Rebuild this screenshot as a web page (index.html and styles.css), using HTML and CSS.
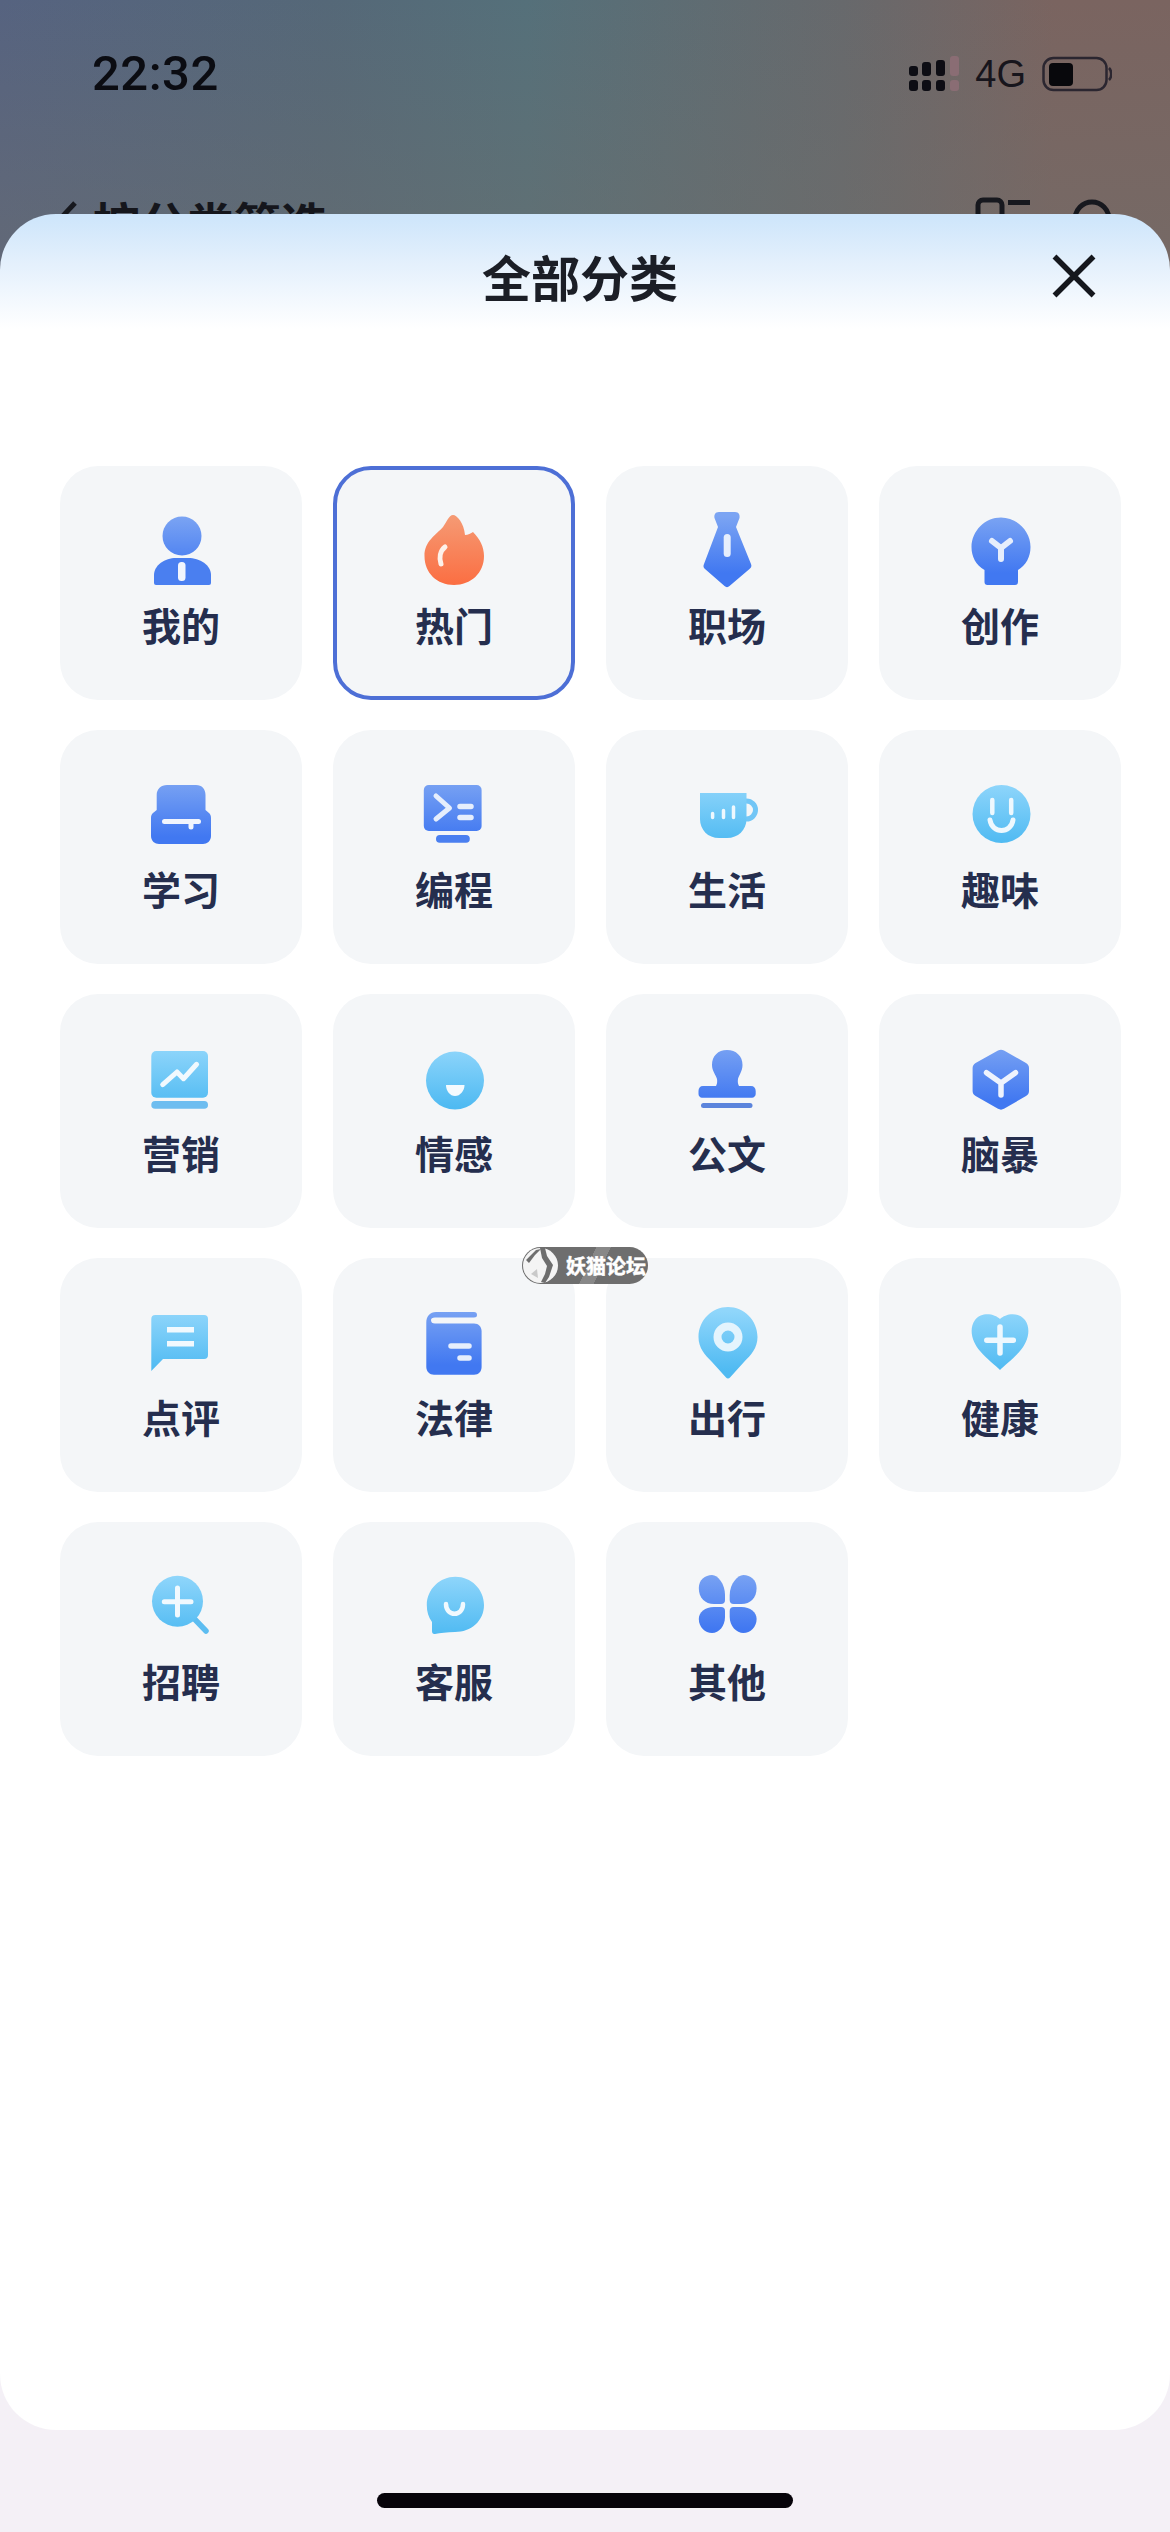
FILE: index.html
```html
<!DOCTYPE html>
<html lang="zh-CN">
<head>
  <meta charset="UTF-8" />
  <meta name="viewport" content="width=device-width, initial-scale=1.0"/>
  <title>全部分类</title>
  <link rel="stylesheet" href="styles.css">
</head>
<body>

  <svg class="icon-defs" aria-hidden="true">
    <defs>
      <linearGradient id="blue" gradientUnits="userSpaceOnUse" x1="0" y1="5" x2="0" y2="62">
        <stop offset="0" stop-color="#7ba4f3"/>
        <stop offset="1" stop-color="#4178f1"/>
      </linearGradient>
      <linearGradient id="sky" gradientUnits="userSpaceOnUse" x1="0" y1="8" x2="0" y2="68">
        <stop offset="0" stop-color="#90d6fb"/>
        <stop offset="1" stop-color="#4fbaf2"/>
      </linearGradient>
      <linearGradient id="orange" gradientUnits="userSpaceOnUse" x1="0" y1="5" x2="0" y2="74">
        <stop offset="0" stop-color="#f59a74"/>
        <stop offset="1" stop-color="#fb6e42"/>
      </linearGradient>
    </defs>
  </svg>

  <header class="backdrop">
    <div class="status-bar">
      <span class="clock">22:32</span>
      <div class="status-right">
        <svg class="signal" viewBox="0 0 52 36" width="52" height="36">
          <g fill="#0d0d14">
            <rect x="0" y="10" width="9" height="10" rx="3"/>
            <rect x="13" y="6" width="9" height="14" rx="3"/>
            <rect x="27" y="4" width="9" height="16" rx="3"/>
            <rect x="0" y="24" width="9" height="11" rx="3"/>
            <rect x="13" y="24" width="9" height="11" rx="3"/>
            <rect x="27" y="24" width="9" height="11" rx="3"/>
          </g>
          <g fill="#8a6d74">
            <rect x="41" y="0" width="9" height="20" rx="3"/>
            <rect x="41" y="24" width="9" height="11" rx="3"/>
          </g>
        </svg>
        <span class="network">4G</span>
        <svg class="battery" viewBox="0 0 70 36" width="70" height="36">
          <rect x="1.5" y="2" width="63" height="32" rx="10" fill="none" stroke="#2b2630" stroke-width="2.5"/>
          <rect x="7" y="7" width="24" height="23" rx="4" fill="#08080c"/>
          <path d="M67 12 C70 15 70 21 67 24" fill="none" stroke="#2b2630" stroke-width="2.5"/>
        </svg>
      </div>
    </div>
    <div class="nav-bar">
      <svg class="nav-back" viewBox="0 0 24 48" width="24" height="48">
        <path d="M20 6 L5 22 L20 38" fill="none" stroke="#17181e" stroke-width="5"/>
      </svg>
      <span class="nav-title">按分类筛选</span>
      <svg class="nav-icons" viewBox="0 0 140 48" width="140" height="48">
        <rect x="3" y="3" width="24" height="40" rx="5" fill="none" stroke="#17181e" stroke-width="5"/>
        <rect x="33" y="3" width="22" height="5" fill="#17181e"/>
        <circle cx="117" cy="22" r="17" fill="none" stroke="#17181e" stroke-width="5"/>
      </svg>
    </div>
  </header>

  <main class="sheet">
    <div class="sheet-head">
      <h1 class="sheet-title">全部分类</h1>
      <svg class="close-icon" viewBox="0 0 44 44" width="44" height="44">
        <path d="M2.5 2.5 L41.5 41.5 M41.5 2.5 L2.5 41.5" fill="none" stroke="#15171d" stroke-width="5.5"/>
      </svg>
    </div>

    <div class="category-grid">

      <div class="category-card">
        <svg class="category-icon" viewBox="0 0 80 80">
          <circle cx="41" cy="25" r="19.5" fill="url(#blue)"/>
          <path d="M13 72 V64 C13 54 24 47 35 47 H47 C59 47 70 54 70 64 V72 a2 2 0 0 1-2 2 H15 a2 2 0 0 1-2-2z" fill="#4a7ff0"/>
          <rect x="37" y="51" width="7.5" height="19" rx="3.5" fill="#f1f5fd"/>
        </svg>
        <span class="category-label">我的</span>
      </div>

      <div class="category-card is-active">
        <svg class="category-icon" viewBox="0 0 80 80">
          <path d="M39 4 C43 4 50 12 51 24 C54 24 57 22 59 21 C66 28 70 36 70 45 C70 62 57 74 40 74 C23 74 10.5 62 10.5 45 C10.5 30 22 24 29 16 C32 12 35 4 39 4 Z" fill="url(#orange)"/>
          <path d="M31 36 C26 40 25 47 27 53" fill="none" stroke="#fdf1ea" stroke-width="5" stroke-linecap="round"/>
        </svg>
        <span class="category-label">热门</span>
      </div>

      <div class="category-card">
        <svg class="category-icon" viewBox="0 0 80 80">
          <path d="M32 1 H48 C52 1 53 4 52.5 7 L49 16 L64 53 C65 55 64 57 62.5 58 L42.5 75 C41 76.5 39 76.5 37.5 75 L18 58 C16.5 57 16 55 17 53 L31 16 L27.5 7 C27 4 28 1 32 1 Z" fill="url(#blue)"/>
          <rect x="36.7" y="23" width="7" height="23" rx="3.5" fill="#e6eefc"/>
        </svg>
        <span class="category-label">职场</span>
      </div>

      <div class="category-card">
        <svg class="category-icon" viewBox="0 0 80 80">
          <path d="M41 6.5 C57 6.5 70.5 20 70.5 36 C70.5 46 66 54 58 59 V71 a3 3 0 0 1-3 3 H27.5 a3 3 0 0 1-3-3 V59 C16 54 11.5 46 11.5 36 C11.5 20 25 6.5 41 6.5 Z" fill="url(#blue)"/>
          <path d="M32 30 L41 37 L50 30 M41 37 V48" fill="none" stroke="#e6eefc" stroke-width="6" stroke-linecap="round" stroke-linejoin="round"/>
        </svg>
        <span class="category-label">创作</span>
      </div>

      <div class="category-card">
        <svg class="category-icon" viewBox="0 0 80 80">
          <path d="M26 10 H55 C61 10 64.5 14 64.5 20 V35 L68 38 C69.5 39 70 41 70 43 V61 C70 66 66 69 62 69 H18 C14 69 10 66 10 61 V43 C10 41 10.5 39 12 38 L15.7 35 V20 C15.7 14 20 10 26 10 Z" fill="url(#blue)"/>
          <path d="M23.5 46.5 H57.5 M50 46.5 V52" fill="none" stroke="#f1f5fd" stroke-width="5" stroke-linecap="round"/>
        </svg>
        <span class="category-label">学习</span>
      </div>

      <div class="category-card">
        <svg class="category-icon" viewBox="0 0 80 80">
          <rect x="9.8" y="10" width="57.8" height="46" rx="5" fill="url(#blue)"/>
          <rect x="22" y="60" width="33.8" height="7.7" rx="3.8" fill="#4a7ff0"/>
          <path d="M22 21 L35.5 33 L22 44" fill="none" stroke="#e6eefc" stroke-width="5" stroke-linecap="round" stroke-linejoin="round"/>
          <path d="M46 31.5 H57 M46 42.5 H57" fill="none" stroke="#e6eefc" stroke-width="5.5" stroke-linecap="round"/>
        </svg>
        <span class="category-label">编程</span>
      </div>

      <div class="category-card">
        <svg class="category-icon" viewBox="0 0 80 80">
          <circle cx="59.5" cy="35" r="9" fill="none" stroke="#72c6f6" stroke-width="5"/>
          <path d="M13 18 H59.5 V44 C59.5 55 51 63 40 63 H32 C21 63 13 55 13 44 Z" fill="url(#sky)"/>
          <path d="M25.6 38.5 V42.5 M36.5 35.5 V42.5 M46.5 32 V42.5" fill="none" stroke="#eef8fe" stroke-width="3.5" stroke-linecap="round"/>
        </svg>
        <span class="category-label">生活</span>
      </div>

      <div class="category-card">
        <svg class="category-icon" viewBox="0 0 80 80">
          <circle cx="41.5" cy="39" r="29" fill="url(#sky)"/>
          <path d="M32.3 25 V38 M51.2 25 V38" fill="none" stroke="#eef8fe" stroke-width="4.5" stroke-linecap="round"/>
          <path d="M30 45 C32 59 51 59 53 45" fill="none" stroke="#eef8fe" stroke-width="5" stroke-linecap="round"/>
        </svg>
        <span class="category-label">趣味</span>
      </div>

      <div class="category-card">
        <svg class="category-icon" viewBox="0 0 80 80">
          <rect x="10.3" y="12" width="56.7" height="46.7" rx="5" fill="url(#sky)"/>
          <rect x="10.3" y="62" width="56.7" height="7.7" rx="3.8" fill="#6dbdf0"/>
          <path d="M21.7 45.7 L36 33 L42.5 39.7 L55.6 25.3" fill="none" stroke="#f1f9fe" stroke-width="5" stroke-linecap="round" stroke-linejoin="round"/>
        </svg>
        <span class="category-label">营销</span>
      </div>

      <div class="category-card">
        <svg class="category-icon" viewBox="0 0 80 80">
          <circle cx="41" cy="41.5" r="29" fill="url(#sky)"/>
          <path d="M32 46 H50.5 C50.5 52 46 57 41 57 C36 57 32 52 32 46 Z" fill="#f4fafe"/>
        </svg>
        <span class="category-label">情感</span>
      </div>

      <div class="category-card">
        <svg class="category-icon" viewBox="0 0 80 80">
          <path d="M40 11 C49 11 55.5 17 55.5 26 C55.5 32 52 36 51 40 C50.5 43 51 45 52 47 H64 C67 47 68.7 49 68.7 52 V55 C68.7 57 67 58.7 65 58.7 H15 C13 58.7 11.5 57 11.5 55 V52 C11.5 49 13 47 16 47 H29 C30 45 30.5 43 30 40 C29 36 25 32 25 26 C25 17 31 11 40 11 Z" fill="url(#blue)"/>
          <rect x="14" y="64" width="51.5" height="5" rx="2.5" fill="#5b84dc"/>
        </svg>
        <span class="category-label">公文</span>
      </div>

      <div class="category-card">
        <svg class="category-icon" viewBox="0 0 80 80">
          <path d="M38 11.5 C40 10.4 42 10.4 44 11.5 L66 24 C68 25 69 27 69 29 V52 C69 54 68 56 66 57 L44 69.8 C42 70.9 40 70.9 38 69.8 L15.6 57 C13.6 56 12.6 54 12.6 52 V29 C12.6 27 13.6 25 15.6 24 Z" fill="url(#blue)"/>
          <path d="M26.5 33.7 L41 44 L55.5 33.7 M41 44 V56" fill="none" stroke="#eef3fd" stroke-width="5.5" stroke-linecap="round" stroke-linejoin="round"/>
        </svg>
        <span class="category-label">脑暴</span>
      </div>

      <div class="category-card">
        <svg class="category-icon" viewBox="0 0 80 80">
          <path d="M14.3 12 H63 a4 4 0 0 1 4 4 V52 a4 4 0 0 1-4 4 H22 L10.3 68 V16 a4 4 0 0 1 4-4 Z" fill="url(#sky)"/>
          <path d="M26 26.7 H53 M26 40.7 H53" fill="none" stroke="#f1f9fe" stroke-width="5.5"/>
        </svg>
        <span class="category-label">点评</span>
      </div>

      <div class="category-card">
        <svg class="category-icon" viewBox="0 0 80 80">
          <path d="M12.3 20 C12.3 13 16 9 22 9 H60 Q63 9 63 12 Q63 14.5 60 14.5 H21 Q17 14.5 17 17 Q17 20.5 21 20.5 H60 C64.7 20.5 67.6 24 67.6 28 V64 C67.6 68.5 64.7 71.7 60 71.7 H20 C15.7 71.7 12.3 68.5 12.3 64 Z" fill="url(#blue)"/>
          <path d="M37 43 H55 M46 55 H55" fill="none" stroke="#e6eefc" stroke-width="5.5" stroke-linecap="round"/>
        </svg>
        <span class="category-label">法律</span>
      </div>

      <div class="category-card">
        <svg class="category-icon" viewBox="0 0 80 80">
          <path d="M41 4 C57 4 70.5 17 70.5 34 C70.5 45 64 52 57 59 L43 74.5 C42 75.9 40 75.9 39 74.5 L25 59 C18 52 11.5 45 11.5 34 C11.5 17 25 4 41 4 Z" fill="url(#sky)"/>
          <circle cx="41" cy="34" r="10.5" fill="none" stroke="#e4f4fd" stroke-width="8"/>
        </svg>
        <span class="category-label">出行</span>
      </div>

      <div class="category-card">
        <svg class="category-icon" viewBox="0 0 80 80">
          <path d="M40 16 C35 11 22 8 15 17 C8 27 13 40 20 48 C27 56 35 62 40 67 C45 62 53 56 60 48 C67 40 72 27 65 17 C58 8 45 11 40 16 Z" fill="url(#sky)"/>
          <path d="M26.8 37.3 H53.3 M40 24 V50" fill="none" stroke="#eef8fe" stroke-width="5.5" stroke-linecap="round"/>
        </svg>
        <span class="category-label">健康</span>
      </div>

      <div class="category-card">
        <svg class="category-icon" viewBox="0 0 80 80">
          <path d="M53.5 52 L65 64" fill="none" stroke="#5dbdf1" stroke-width="5.5" stroke-linecap="round"/>
          <circle cx="36.5" cy="34.3" r="25.5" fill="url(#sky)"/>
          <path d="M23.3 34.7 H50 M36.5 21 V48" fill="none" stroke="#f1f9fe" stroke-width="5" stroke-linecap="round"/>
        </svg>
        <span class="category-label">招聘</span>
      </div>

      <div class="category-card">
        <svg class="category-icon" viewBox="0 0 80 80">
          <path d="M41.4 9.7 C57 9.7 70 22 70 38 C70 54 57 65 41 65 C33 65 26 66 21 67 C19 67.3 18 66 18 64 L18 55 C14.5 50 12.8 45 12.8 38 C12.8 22 26 9.7 41.4 9.7 Z" fill="url(#sky)"/>
          <path d="M32 37 C32 50 49 50 49 37" fill="none" stroke="#f1f9fe" stroke-width="4.5" stroke-linecap="round"/>
        </svg>
        <span class="category-label">客服</span>
      </div>

      <div class="category-card">
        <svg class="category-icon" viewBox="0 0 80 80">
          <path d="M25 8 C31 8 38 17 38 28 V33 Q38 37 34 37 H27 C18 37 11.8 31 11.8 21 C11.8 13 18 8 25 8 Z" fill="url(#blue)"/>
          <path d="M56.4 8 C50.4 8 42.7 17 42.7 28 V33 Q42.7 37 46.7 37 H54.4 C63.4 37 69.6 31 69.6 21 C69.6 13 63.4 8 56.4 8 Z" fill="url(#blue)"/>
          <path d="M27 40 H34 Q38 40 38 44 V50 C38 59 32 66 25 66 C18 66 11.8 60 11.8 52 C11.8 45 18 40 27 40 Z" fill="url(#blue)"/>
          <path d="M54.4 40 H46.7 Q42.7 40 42.7 44 V50 C42.7 59 49.4 66 56.4 66 C63.4 66 69.6 60 69.6 52 C69.6 45 63.4 40 54.4 40 Z" fill="url(#blue)"/>
        </svg>
        <span class="category-label">其他</span>
      </div>

    </div>
  </main>

  <footer class="home-area">
    <div class="home-bar"></div>
  </footer>

  <div class="watermark">
    <svg class="watermark-logo" viewBox="0 0 37 37" width="37" height="37">
      <circle cx="18.5" cy="18.5" r="17.5" fill="#f4f4f4"/>
      <path d="M4 13 L14 3 L19 2 L13 8 L7 16 Z" fill="#6e6e6e"/>
      <path d="M18 1 L23 1 L25 9 L31 18 L27 30 L23 36 L19 35 L23 27 L25 19 L20 11 Z" fill="#6e6e6e"/>
      <path d="M9 27 L15 22 L16 31 Z" fill="#c9c9c9"/>
    </svg>
    <span class="watermark-text">妖猫论坛</span>
  </div>

</body>
</html>
```

FILE: styles.css
```css
* {
  box-sizing: border-box;
}

html,
body {
  margin: 0;
  padding: 0;
}

body {
  width: 1170px;
  height: 2532px;
  overflow: hidden;
  position: relative;
  display: flex;
  flex-direction: column;
  font-family: "Liberation Sans", "Noto Sans CJK SC", sans-serif;
  background-color: #f4f0f6;
  background-image:
    linear-gradient(180deg, rgba(112, 112, 108, 0) 0, rgba(112, 112, 108, 0.4) 230px),
    linear-gradient(90deg, #566380 0, #556878 28%, #55707a 45%, #67696c 72%, #7a6460 90%, #7a6460 100%);
  background-size: 100% 280px;
  background-repeat: no-repeat;
}

.icon-defs {
  width: 0;
  height: 0;
  flex: none;
}

/* blurred page behind the sheet */
.backdrop {
  height: 214px;
  flex: none;
  overflow: hidden;
  padding-top: 45px;
}

.status-bar {
  height: 56px;
  display: flex;
  align-items: center;
  justify-content: space-between;
  padding: 0 58px 0 92px;
}

.clock {
  font-family: Roboto, "Liberation Sans", sans-serif;
  font-size: 49px;
  font-weight: 500;
  letter-spacing: 0.5px;
  color: #0b0c12;
}

.status-right {
  display: flex;
  align-items: center;
  margin-top: 2px;
}

.signal {
  margin-right: 14px;
}

.network {
  font-size: 38px;
  color: #17151c;
  margin-right: 16px;
}

.nav-bar {
  margin-top: 92px;
  height: 56px;
  display: flex;
  align-items: center;
  padding: 0 55px 0 55px;
}

.nav-back {
  margin-right: 14px;
}

.nav-title {
  font-family: "Noto Sans CJK SC", sans-serif;
  font-size: 47px;
  font-weight: 700;
  color: #15161c;
}

.nav-icons {
  margin-left: auto;
}

/* bottom sheet */
.sheet {
  height: 2216px;
  flex: none;
  background: linear-gradient(180deg, #cde5fb 0, #e4f0fc 50px, #ffffff 115px);
  border-radius: 56px;
}

.sheet-head {
  display: flex;
  align-items: center;
  height: 94px;
  padding: 30px 74px 0 482px;
}

.sheet-title {
  margin: 0;
  font-family: "Noto Sans CJK SC", sans-serif;
  font-size: 49px;
  font-weight: 700;
  line-height: 64px;
  color: #1b1e26;
}

.close-icon {
  margin-left: auto;
}

.category-grid {
  display: grid;
  grid-template-columns: repeat(4, 242px);
  grid-auto-rows: 234px;
  gap: 30px 31px;
  margin-top: 158px;
  padding-left: 60px;
}

.category-card {
  display: flex;
  flex-direction: column;
  align-items: center;
  padding-top: 45px;
  background-color: #f4f6f8;
  border-radius: 38px;
}

.category-card.is-active {
  padding-top: 41px;
  border: 4px solid #4d6fd6;
}

.category-icon {
  width: 80px;
  height: 80px;
  flex: none;
}

.category-label {
  margin-top: 9px;
  font-family: "Noto Sans CJK SC", sans-serif;
  font-size: 39px;
  font-weight: 700;
  line-height: 48px;
  color: #252e4e;
}

/* home indicator */
.home-area {
  flex: 1;
  display: flex;
  justify-content: center;
  padding-top: 63px;
}

.home-bar {
  width: 416px;
  height: 15px;
  background-color: #07030a;
  border-radius: 8px;
}

/* forum stamp over the grid */
.watermark {
  position: absolute;
  left: 522px;
  top: 1247px;
  width: 126px;
  height: 37px;
  display: flex;
  align-items: center;
  border-radius: 19px;
  background-color: #6e6e6e;
  background-image: linear-gradient(115deg, transparent 52%, rgba(255, 255, 255, 0.18) 52%, rgba(255, 255, 255, 0.18) 62%, transparent 62%);
}

.watermark-logo {
  flex: none;
}

.watermark-text {
  margin-left: 7px;
  font-family: "Noto Sans CJK SC", sans-serif;
  font-size: 20px;
  font-weight: 700;
  line-height: 37px;
  white-space: nowrap;
  color: #ffffff;
  -webkit-text-stroke: 0.5px #ffffff;
}
```
